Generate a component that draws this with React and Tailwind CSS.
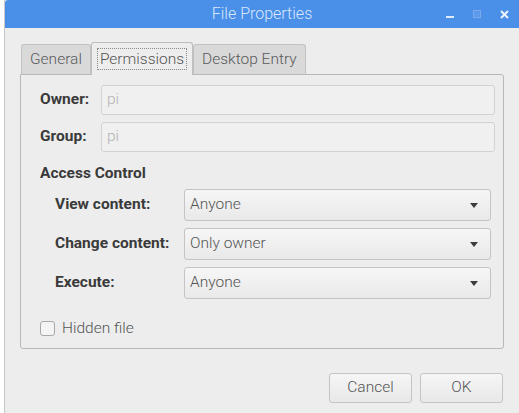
import { useState } from "react"

function Caret() {
  return (
    <svg width="8" height="5" viewBox="0 0 8 5" className="shrink-0">
      <path d="M0 0h8L4 5z" fill="#3c3c3c" />
    </svg>
  )
}

function Select({ value }) {
  return (
    <div className="flex h-[32px] flex-1 items-center justify-between rounded-[3px] border border-[#c4c4c4] bg-gradient-to-b from-[#f6f6f6] to-[#e9e9e9] pl-[5px] pr-[12px] text-[#555]">
      <span>{value}</span>
      <Caret />
    </div>
  )
}

function Field({ label, value }) {
  return (
    <div className="flex items-center">
      <span className="w-[61px] font-bold text-[#3a3a3a]">{label}</span>
      <div className="flex h-[30px] flex-1 items-center rounded-[3px] border border-[#d2d2d2] bg-[#f0f0f0] pl-[5px] text-[#b3b3b3]">
        {value}
      </div>
    </div>
  )
}

export default function App() {
  const [hidden, setHidden] = useState(false)
  const tabs = ["General", "Permissions", "Desktop Entry"]
  const access = [
    { label: "View content:", value: "Anyone" },
    { label: "Change content:", value: "Only owner" },
    { label: "Execute:", value: "Anyone" },
  ]

  return (
    <div className="h-[413px] w-[519px] bg-white pl-[4px] text-[15.5px] font-light font-['Roboto',sans-serif]">
      <div className="flex h-full flex-col border-l border-[#c8c8c8] bg-[#ededed]">
        {/* title bar */}
        <div className="relative flex h-[28px] items-center justify-center rounded-tl-[3px] bg-[#4a8fe8] text-[16px] text-[#dbe8fb]">
          File Properties
          <div className="absolute right-[10px] top-0 flex h-full items-center gap-[19px]">
            <div className="mt-[6px] h-[2px] w-[8px] bg-[#dfeafb]" />
            <div className="h-[8px] w-[8px] border border-[#7aa9ee] bg-[#5d9aea]" />
            <svg width="9" height="9" viewBox="0 0 9 9">
              <path d="M1 1l7 7M8 1l-7 7" stroke="#eef4fd" strokeWidth="2" />
            </svg>
          </div>
        </div>

        <div className="flex flex-1 flex-col px-[15px] pt-[14px]">
          {/* tabs */}
          <div className="relative z-10 flex items-end pl-[1px]">
            {tabs.map((t) => {
              const active = t === "Permissions"
              return active ? (
                <div key={t} className="-mb-px flex h-[33px] items-center rounded-t-[3px] border border-b-0 border-[#bdbdbd] bg-[#ededed] px-[5px] text-[#555]">
                  <span className="border border-dotted border-[#888] px-[2px] leading-[20px]">{t}</span>
                </div>
              ) : (
                <div key={t} className="flex h-[30px] items-center rounded-t-[3px] border border-b-0 border-[#c2c2c2] bg-[#d9d9d9] px-[8px] text-[#5a5a5a]">
                  {t}
                </div>
              )
            })}
          </div>

          {/* panel */}
          <div className="flex h-[275px] flex-col rounded-b-[3px] rounded-tr-[3px] border border-[#b8b8b8] pl-[19px] pr-[8px] pt-[10px]">
            <div className="flex flex-col gap-[7px]">
              <Field label="Owner:" value="pi" />
              <Field label="Group:" value="pi" />
            </div>
            <div className="mt-[12px] font-bold leading-[18px] text-[#3a3a3a]">Access Control</div>
            <div className="mt-[7px] flex flex-col gap-[7px] pl-[15px] pr-[4px]">
              {access.map((a) => (
                <div key={a.label} className="flex items-center">
                  <span className="w-[129px] font-bold text-[#3a3a3a]">{a.label}</span>
                  <Select value={a.value} />
                </div>
              ))}
            </div>
            <label className="mt-[21px] flex items-center gap-[7px] leading-[16px] text-[#555]">
              <span
                onClick={() => setHidden(!hidden)}
                className="h-[15px] w-[15px] rounded-[3px] border border-[#a8a8a8] bg-[#f4f4f4]"
              />
              Hidden file
            </label>
          </div>

          {/* buttons */}
          <div className="mt-[24px] flex justify-end gap-[8px] pr-[1px]">
            <button className="h-[30px] w-[83px] rounded-[3px] border border-[#c4c4c4] bg-gradient-to-b from-[#f6f6f6] to-[#e8e8e8] text-[#555]">
              Cancel
            </button>
            <button className="h-[30px] w-[83px] rounded-[3px] border border-[#c4c4c4] bg-gradient-to-b from-[#f6f6f6] to-[#e8e8e8] text-[#555]">
              OK
            </button>
          </div>
        </div>
      </div>
    </div>
  )
}
